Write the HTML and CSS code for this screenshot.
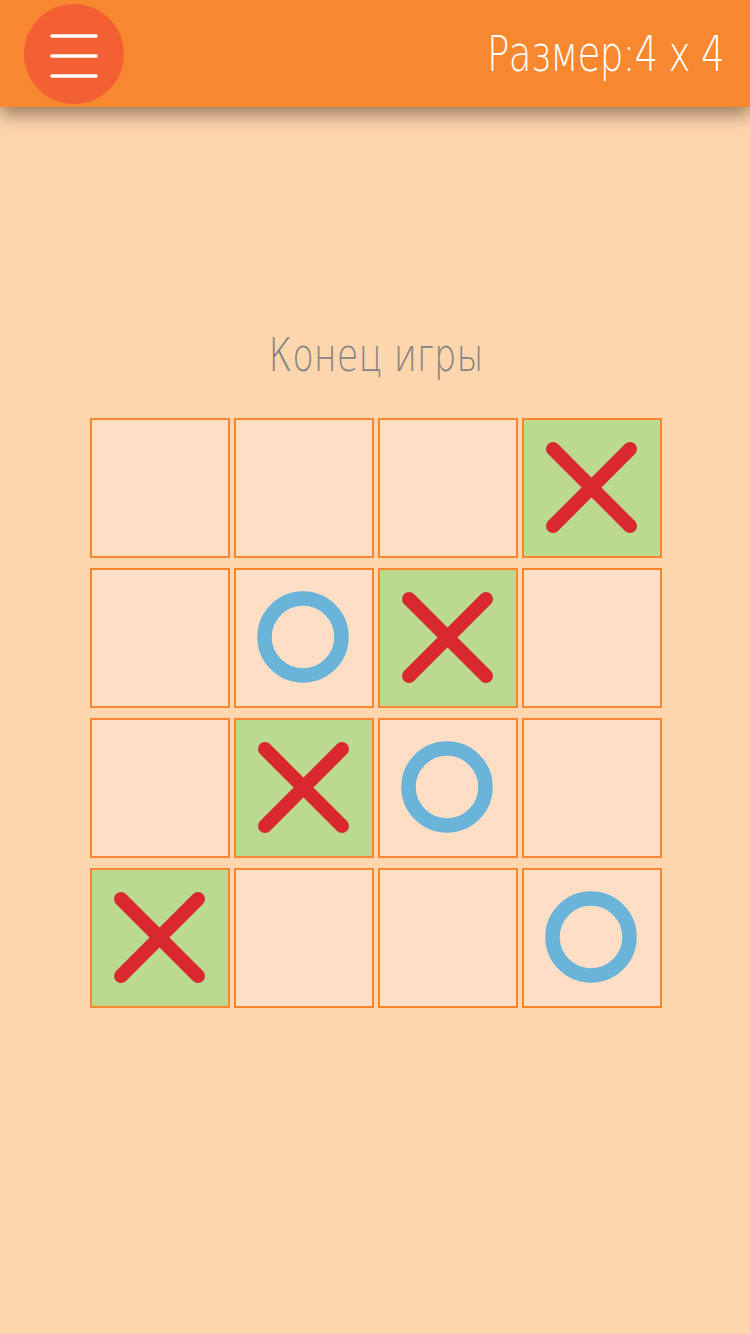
FILE: index.html
```html
<!DOCTYPE html>
<html lang="ru">
<head>
<meta charset="utf-8">
<link rel="stylesheet" href="styles.css">
</head>
<body>
<header class="bar">
  <button class="menu" aria-label="menu">
    <svg width="48" height="46" viewBox="0 0 48 46">
      <g stroke="#fff" stroke-width="3.4" stroke-linecap="round">
        <line x1="2" y1="4" x2="46" y2="4"/>
        <line x1="2" y1="24" x2="46" y2="24"/>
        <line x1="2" y1="44" x2="46" y2="44"/>
      </g>
    </svg>
  </button>
  <div class="size">Размер:4 x 4</div>
</header>
<main class="content">
  <h1 class="status">Конец игры</h1>
  <div class="board">
    <div class="cell"></div>
    <div class="cell"></div>
    <div class="cell"></div>
    <div class="cell win"><svg class="mark" viewBox="0 0 140 140"><g stroke="#d9292f" stroke-width="14" stroke-linecap="round"><line x1="31" y1="31" x2="108" y2="108"/><line x1="108" y1="31" x2="31" y2="108"/></g></svg></div>

    <div class="cell"></div>
    <div class="cell"><svg class="mark" viewBox="0 0 140 140"><circle cx="69" cy="69" r="38.5" fill="none" stroke="#6ab4da" stroke-width="14.5"/></svg></div>
    <div class="cell win"><svg class="mark" viewBox="0 0 140 140"><g stroke="#d9292f" stroke-width="14" stroke-linecap="round"><line x1="31" y1="31" x2="108" y2="108"/><line x1="108" y1="31" x2="31" y2="108"/></g></svg></div>
    <div class="cell"></div>

    <div class="cell"></div>
    <div class="cell win"><svg class="mark" viewBox="0 0 140 140"><g stroke="#d9292f" stroke-width="14" stroke-linecap="round"><line x1="31" y1="31" x2="108" y2="108"/><line x1="108" y1="31" x2="31" y2="108"/></g></svg></div>
    <div class="cell"><svg class="mark" viewBox="0 0 140 140"><circle cx="69" cy="69" r="38.5" fill="none" stroke="#6ab4da" stroke-width="14.5"/></svg></div>
    <div class="cell"></div>

    <div class="cell win"><svg class="mark" viewBox="0 0 140 140"><g stroke="#d9292f" stroke-width="14" stroke-linecap="round"><line x1="31" y1="31" x2="108" y2="108"/><line x1="108" y1="31" x2="31" y2="108"/></g></svg></div>
    <div class="cell"></div>
    <div class="cell"></div>
    <div class="cell"><svg class="mark" viewBox="0 0 140 140"><circle cx="69" cy="69" r="38.5" fill="none" stroke="#6ab4da" stroke-width="14.5"/></svg></div>
  </div>
</main>
</body>
</html>
```
FILE: styles.css
```css
html, body {
  margin: 0;
  padding: 0;
}
body {
  width: 750px;
  height: 1334px;
  background: #fed6ad;
  font-family: "DejaVu Sans", "Noto Sans", sans-serif;
  overflow: hidden;
}
.bar {
  height: 107px;
  background: #f7882f;
  display: flex;
  align-items: center;
  justify-content: space-between;
  padding: 0 26px 0 24px;
  box-sizing: border-box;
  box-shadow: 0 8px 16px rgba(60, 40, 20, 0.5);
  position: relative;
  z-index: 1;
}
.menu {
  width: 100px;
  height: 100px;
  border-radius: 50%;
  background: #f26034;
  border: none;
  padding: 0;
  display: flex;
  align-items: center;
  justify-content: center;
  margin-top: 1px;
}
.menu svg {
  display: block;
  margin-top: 2px;
}
.size {
  color: #fff;
  font-size: 50px;
  font-weight: 200;
  font-stretch: condensed;
  letter-spacing: -1px;
  transform: scaleX(0.745);
  transform-origin: right center;
  white-space: nowrap;
}
.content {
  padding-left: 90px;
}
.status {
  margin: 0;
  padding-top: 221px;
  width: 572px;
  text-align: center;
  color: #858585;
  font-size: 46px;
  font-weight: 200;
  font-stretch: condensed;
  line-height: 54px;
  transform: scaleX(0.765);
}
.board {
  margin-top: 36px;
  display: grid;
  grid-template-columns: repeat(4, 140px);
  grid-auto-rows: 140px;
  column-gap: 4px;
  row-gap: 10px;
}
.cell {
  box-sizing: border-box;
  border: 2px solid #f7882f;
  background: #fedec5;
  position: relative;
}
.cell.win {
  background: #bbd98f;
}
.mark {
  position: absolute;
  left: -2px;
  top: -2px;
  width: 140px;
  height: 140px;
}
```
